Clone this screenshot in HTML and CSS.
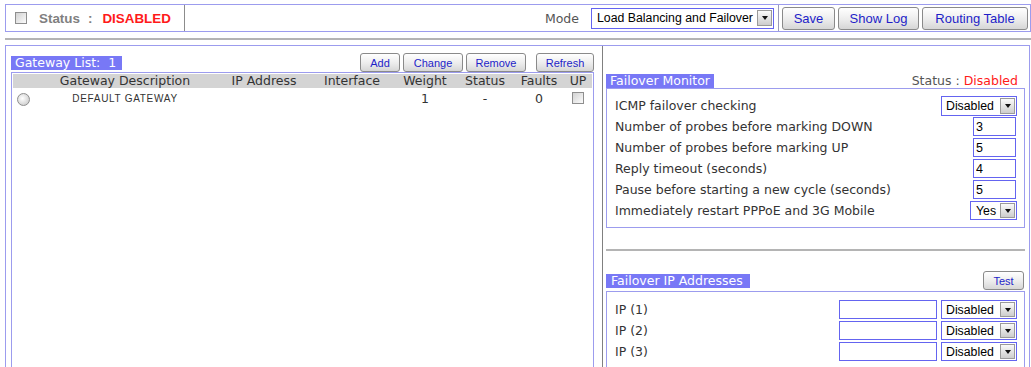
FILE: index.html
```html
<!DOCTYPE html>
<html>
<head>
<meta charset="utf-8">
<link rel="stylesheet" href="styles.css">
</head>
<body>
<div class="page">
  <div class="topbar">
    <div class="tb-status">
      <input type="checkbox" class="chk">
      <span>Status</span><span class="st-colon">:</span><span class="st-val">DISABLED</span>
    </div>
    <div class="tb-mode">
      <span class="mode-label">Mode</span>
      <div class="sel wide">
        <select><option>Load Balancing and Failover</option></select>
        <span class="arrow"></span>
      </div>
    </div>
    <div class="tb-actions">
      <button class="btn b-save">Save</button>
      <button class="btn b-log">Show Log</button>
      <button class="btn b-route">Routing Table</button>
    </div>
  </div>
  <div class="rule"></div>
  <div class="main">
    <div class="left">
      <div class="gw-head">
        <span class="tag gw-tag">Gateway List:  1</span>
        <div class="gw-btns">
          <button class="sbtn b-add">Add</button>
          <button class="sbtn b-change">Change</button>
          <button class="sbtn b-remove">Remove</button>
          <button class="sbtn b-refresh">Refresh</button>
        </div>
      </div>
      <div class="gw-table">
        <div class="gw-row gw-hdr">
          <span></span>
          <span>Gateway Description</span>
          <span>IP Address</span>
          <span>Interface</span>
          <span>Weight</span>
          <span>Status</span>
          <span>Faults</span>
          <span>UP</span>
          <span></span>
        </div>
        <div class="gw-row gw-data">
          <span class="c-radio"><input type="radio" class="rad" name="gw"></span>
          <span class="gw-name">DEFAULT GATEWAY</span>
          <span></span>
          <span></span>
          <span>1</span>
          <span>-</span>
          <span>0</span>
          <span><input type="checkbox" class="chk"></span>
          <span></span>
        </div>
      </div>
    </div>
    <div class="right">
      <div class="sec-head mon-head">
        <span class="tag">Failover Monitor</span>
        <span class="mon-status">Status : <span class="red">Disabled</span></span>
      </div>
      <div class="mon-box">
        <div class="frow"><span>ICMP failover checking</span>
          <div class="sel sm"><select><option>Disabled</option></select><span class="arrow"></span></div>
        </div>
        <div class="frow"><span>Number of probes before marking DOWN</span><input class="num" type="text" value="3"></div>
        <div class="frow"><span>Number of probes before marking UP</span><input class="num" type="text" value="5"></div>
        <div class="frow"><span>Reply timeout (seconds)</span><input class="num" type="text" value="4"></div>
        <div class="frow"><span>Pause before starting a new cycle (seconds)</span><input class="num" type="text" value="5"></div>
        <div class="frow"><span>Immediately restart PPPoE and 3G Mobile</span>
          <div class="sel yes"><select><option>Yes</option></select><span class="arrow"></span></div>
        </div>
      </div>
      <div class="rule2"></div>
      <div class="sec-head ip-head">
        <span class="tag ip-tag">Failover IP Addresses</span>
        <button class="sbtn b-test">Test</button>
      </div>
      <div class="ip-box">
        <div class="iprow"><span class="ip-label">IP (1)</span><input class="ipin" type="text"><div class="sel sm ipsel"><select><option>Disabled</option></select><span class="arrow"></span></div></div>
        <div class="iprow"><span class="ip-label">IP (2)</span><input class="ipin" type="text"><div class="sel sm ipsel"><select><option>Disabled</option></select><span class="arrow"></span></div></div>
        <div class="iprow"><span class="ip-label">IP (3)</span><input class="ipin" type="text"><div class="sel sm ipsel"><select><option>Disabled</option></select><span class="arrow"></span></div></div>
      </div>
    </div>
  </div>
</div>
</body>
</html>
```

FILE: styles.css
```css
* { box-sizing: border-box; }
body {
  margin: 0;
  font-family: "DejaVu Sans", Verdana, sans-serif;
  font-size: 12.5px;
  color: #333;
  background: #fff;
  overflow: hidden;
}
.page { padding: 4px 0 0 5px; width: 1031px; }

/* top bar */
.topbar {
  display: flex;
  width: 1026px;
  height: 28px;
  border: 1px solid #9c9cee;
}
.tb-status {
  width: 179px;
  border-right: 1px solid #8c8c8c;
  display: flex;
  align-items: center;
  padding-left: 9px;
  font-family: "Liberation Sans", Arial, sans-serif;
  font-size: 13.4px;
  font-weight: bold;
  color: #808080;
}
.chk {
  appearance: none;
  -webkit-appearance: none;
  margin: 0;
  width: 12px;
  height: 12px;
  border: 1px solid #8e8e8e;
  background: linear-gradient(135deg, #d2d2d2, #fbfbfb);
}
.tb-status .chk { margin-right: 12px; }
.st-colon { margin: 0 10px 0 8px; }
.st-val { color: #ff1a1a; }

.tb-mode {
  flex: 1;
  display: flex;
  justify-content: flex-end;
  align-items: center;
  padding-right: 4px;
}
.mode-label { color: #555; margin-right: 12px; }

.tb-actions {
  display: flex;
  align-items: center;
  gap: 3px;
  padding: 0 2px 0 3px;
  border-left: 1px solid #9a9ab8;
}
.btn, .sbtn {
  font-family: "Liberation Sans", Arial, sans-serif;
  color: #1e1ec8;
  border: 1px solid #8a8a8a;
  border-radius: 3px;
  background: linear-gradient(#ffffff, #ececec 55%, #d6d6d6);
  padding: 0;
}
.btn { height: 23px; font-size: 13px; }
.b-save { width: 53px; }
.b-log { width: 81px; }
.b-route { width: 106px; }

.sbtn { height: 19px; font-size: 11px; }
.b-add { width: 40px; }
.b-change { width: 60px; }
.b-remove { width: 60px; }
.b-refresh { width: 58px; margin-left: 7px; }
.b-test { width: 41px; margin-right: 1px; }

.rule {
  width: 1026px;
  height: 2px;
  margin-top: 6px;
  background: #b4b4b4;
}

/* main */
.main {
  margin-top: 5px;
  display: grid;
  grid-template-columns: 597px 1fr;
  width: 1025px;
  height: 330px;
  border: 1px solid #9c9cee;
  border-bottom: none;
}
.left {
  border-right: 1px solid #808080;
  padding: 7px 8px 0 5px;
}
.gw-head { display: flex; align-items: center; height: 19px; }
.tag {
  background: #7878f6;
  color: #fff;
  height: 14px;
  line-height: 14px;
  padding: 0 4px;
  white-space: pre;
}
.gw-tag { width: 111px; padding-left: 4px; }
.ip-tag { width: 144px; padding-left: 5px; }
.gw-btns { margin-left: auto; display: flex; gap: 3px; }

.gw-table {
  width: 583px;
  height: 300px;
  border: 1px solid #9c9cee;
  border-bottom: none;
  padding: 1px;
}
.gw-row {
  display: grid;
  grid-template-columns: 25px 174px 104px 72px 74px 46px 62px 16px 1fr;
}
.gw-row > span {
  display: flex;
  justify-content: center;
  align-items: center;
  white-space: nowrap;
}
.gw-hdr {
  background: #d4d4d4;
  height: 14px;
  line-height: 14px;
  color: #333;
}
.gw-data { height: 20px; }
.gw-row > .c-radio { justify-content: flex-start; padding-left: 4px; }
.rad {
  appearance: none;
  -webkit-appearance: none;
  margin: 2px 0 0 0;
  width: 13px;
  height: 13px;
  border-radius: 50%;
  border: 1px solid #8e8e8e;
  background: radial-gradient(circle at 40% 40%, #ffffff, #d4d4d4 70%, #bdbdbd);
}
.gw-name {
  font-family: "Liberation Sans", Arial, sans-serif;
  font-size: 10px;
  letter-spacing: 0.7px;
  color: #333;
}

/* right */
.right { padding: 28px 4px 0 3px; }
.sec-head {
  display: flex;
  align-items: center;
  justify-content: space-between;
}
.mon-head { height: 14px; }
.mon-status { color: #555; margin-right: 7px; line-height: 14px; }
.red { color: #ff1a1a; }

.mon-box {
  border: 1px solid #9c9cee;
  padding: 6px 7px 6px 8px;
}
.frow {
  display: flex;
  align-items: center;
  justify-content: space-between;
  height: 21px;
}
.num, .ipin {
  height: 19px;
  border: 1px solid #6464f0;
  font: 12.5px "Liberation Sans", Arial, sans-serif;
  color: #000;
  padding: 0 2px;
  outline: none;
}
.num { width: 43px; margin-right: 1px; }

.sel {
  display: flex;
  align-items: center;
  border: 1px solid #6464f0;
  height: 20px;
  background: #fff;
  padding: 1px;
}
.sel select {
  appearance: none;
  -webkit-appearance: none;
  border: 0;
  background: transparent;
  font: 12.3px "Liberation Sans", Arial, sans-serif;
  color: #000;
  padding: 0 0 0 4px;
  margin: 0;
  flex: 1;
  min-width: 0;
  height: 100%;
  outline: none;
}
.arrow {
  flex: none;
  width: 15px;
  height: 16px;
  border: 1px solid #9a9a9a;
  background: linear-gradient(#fafafa, #cdcdcd);
  display: flex;
  align-items: center;
  justify-content: center;
}
.arrow::after {
  content: "";
  border-left: 3.5px solid transparent;
  border-right: 3.5px solid transparent;
  border-top: 4px solid #111;
}
.sel.wide { width: 183px; height: 21px; }
.sel.sm { width: 76px; }
.sel.sm select { padding-left: 3px; }
.sel.yes { width: 47px; height: 19px; }
.sel.yes .arrow { height: 15px; }
.sel.ipsel { height: 19px; }
.sel.ipsel .arrow { height: 15px; }

.rule2 { height: 2px; background: #b4b4b4; margin-top: 21px; }
.ip-head { margin-top: 20px; height: 19px; }
.ip-box {
  margin-top: 1px;
  height: 120px;
  border: 1px solid #9c9cee;
  border-bottom: none;
  padding: 7px 7px 0 8px;
}
.iprow { display: flex; align-items: center; height: 21px; }
.ip-label { flex: 1; }
.ipin { width: 98px; margin-right: 4px; }
```
